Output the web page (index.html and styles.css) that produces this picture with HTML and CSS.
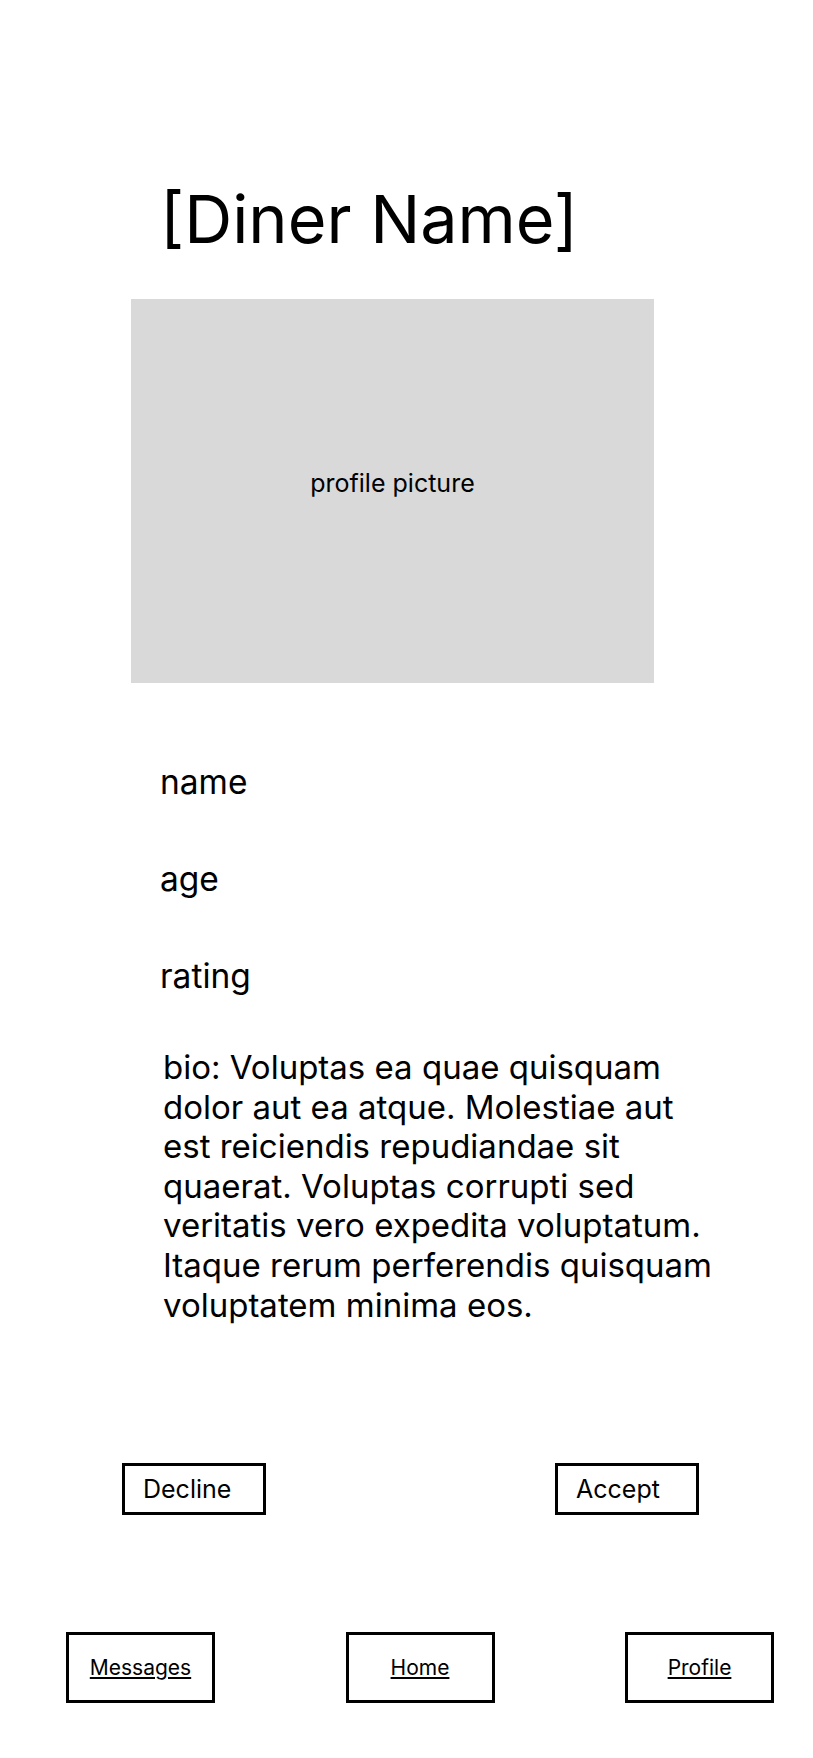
FILE: index.html
```html
<!DOCTYPE html>
<html lang="en">
<head>
<meta charset="utf-8">
<title>Diner</title>
<link rel="stylesheet" href="styles.css">
</head>
<body>
<main class="page">
  <h1 class="title">[Diner Name]</h1>
  <div class="photo"><span>profile picture</span></div>
  <ul class="facts">
    <li>name</li>
    <li>age</li>
    <li>rating</li>
  </ul>
  <p class="bio">bio: Voluptas ea quae quisquam dolor aut ea atque. Molestiae aut est reiciendis repudiandae sit quaerat. Voluptas corrupti sed veritatis vero expedita voluptatum. Itaque rerum perferendis quisquam voluptatem minima eos.</p>
  <div class="actions">
    <button class="btn" type="button">Decline</button>
    <button class="btn" type="button">Accept</button>
  </div>
  <nav class="nav">
    <a class="nav-item" href="#">Messages</a>
    <a class="nav-item" href="#">Home</a>
    <a class="nav-item" href="#">Profile</a>
  </nav>
</main>
</body>
</html>
```

FILE: styles.css
```css
html, body {
  margin: 0;
  padding: 0;
  background: #ffffff;
}

body {
  font-family: Inter, "Noto Sans", sans-serif;
  color: #000000;
}

.page {
  padding-top: 180px;
}

.title {
  margin: 0 0 0 160px;
  font-size: 66.5px;
  font-weight: 400;
  line-height: 78px;
}

.photo {
  box-sizing: border-box;
  margin: 41px 0 0 131px;
  width: 523px;
  height: 384px;
  padding-bottom: 16px;
  background: #d9d9d9;
  display: flex;
  align-items: center;
  justify-content: center;
  font-size: 25px;
}

.facts {
  list-style: none;
  margin: 77px 0 0 160px;
  padding: 0;
  font-size: 33.5px;
  line-height: 44px;
}

.facts li + li {
  margin-top: 53px;
}

.bio {
  margin: 50px 0 0 163px;
  width: 558px;
  font-size: 33px;
  line-height: 39.6px;
}

.actions {
  display: flex;
  justify-content: space-between;
  margin: 138px 0 0 122px;
  width: 577px;
}

.btn {
  box-sizing: border-box;
  width: 144px;
  height: 52px;
  border: 3px solid #000000;
  background: #ffffff;
  color: #000000;
  font-family: Inter, "Noto Sans", sans-serif;
  font-size: 25px;
  text-align: left;
  padding: 0 0 0 18px;
  border-radius: 0;
}

.nav {
  display: flex;
  justify-content: space-between;
  margin: 117px 0 0 66px;
  width: 708px;
}

.nav-item {
  box-sizing: border-box;
  width: 149px;
  height: 71px;
  border: 3px solid #000000;
  display: flex;
  align-items: center;
  justify-content: center;
  color: #000000;
  text-decoration: underline;
  font-size: 21px;
}
```
